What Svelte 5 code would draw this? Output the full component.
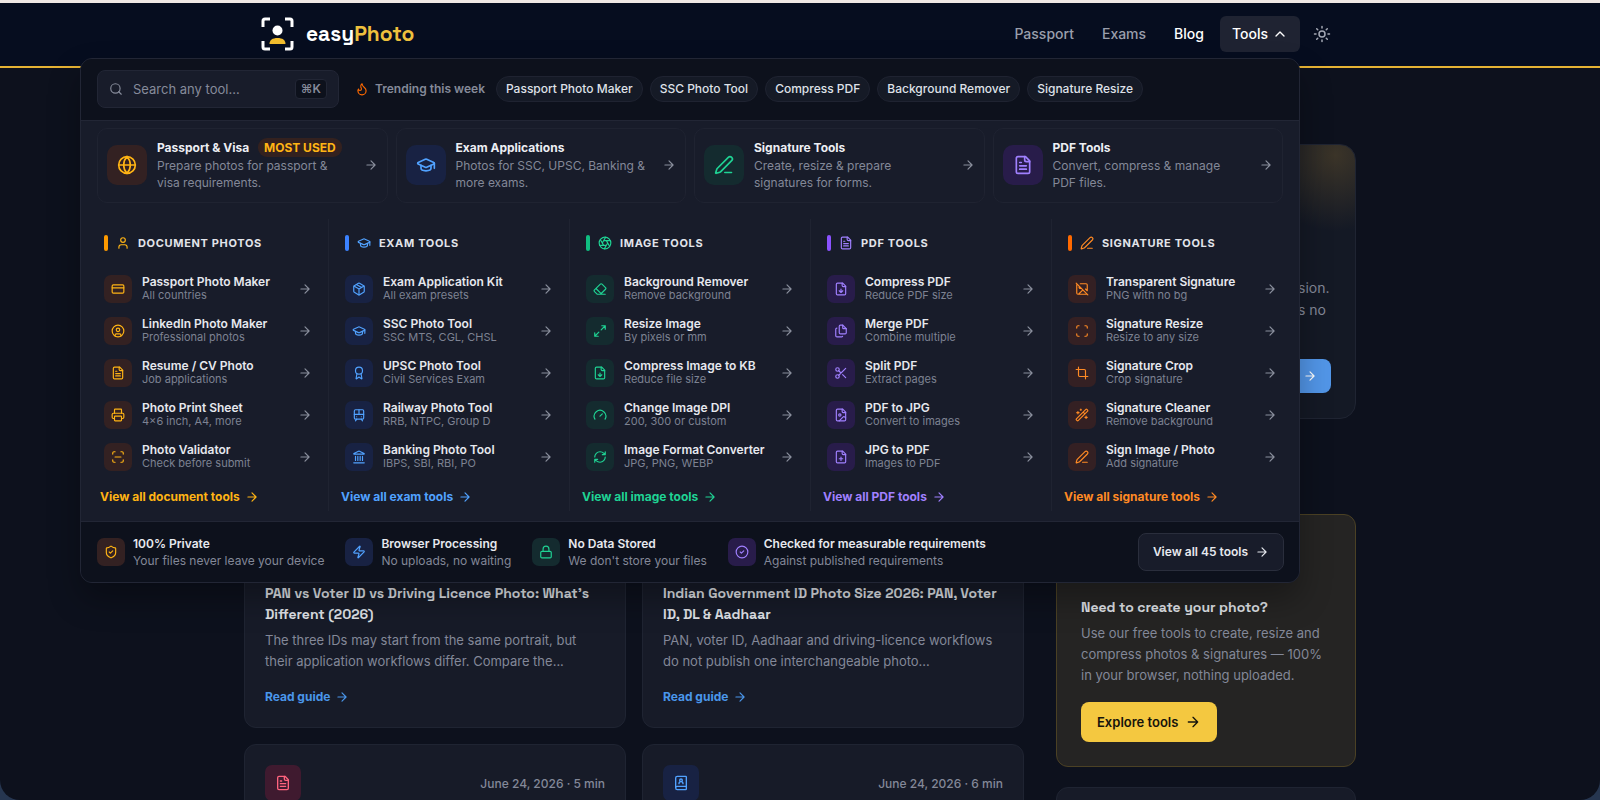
<script lang="ts">
	const file =
		'<path d="M15 2H6a2 2 0 0 0-2 2v16a2 2 0 0 0 2 2h12a2 2 0 0 0 2-2V7Z"/><path d="M14 2v4a2 2 0 0 0 2 2h4"/>';
	const corners =
		'<path d="M3 7V5a2 2 0 0 1 2-2h2M17 3h2a2 2 0 0 1 2 2v2M21 17v2a2 2 0 0 1-2 2h-2M7 21H5a2 2 0 0 1-2-2v-2"/>';

	// 24px stroke icons
	const icons: Record<string, string> = {
		arrow: '<path d="M5 12h14M12 5l7 7-7 7"/>',
		chevron: '<path d="m18 15-6-6-6 6"/>',
		sun: '<circle cx="12" cy="12" r="4"/><path d="M12 2v2M12 20v2M4.93 4.93l1.41 1.41M17.66 17.66l1.41 1.41M2 12h2M20 12h2M6.34 17.66l-1.41 1.41M19.07 4.93l-1.41 1.41"/>',
		search: '<circle cx="11" cy="11" r="8"/><path d="m21 21-4.34-4.34"/>',
		flame:
			'<path d="M8.5 14.5A2.5 2.5 0 0 0 11 12c0-1.38-.5-2-1-3-1.072-2.143-.224-4.054 2-6 .5 2.5 2 4.9 4 6.5 2 1.6 3 3.5 3 5.5a7 7 0 1 1-14 0c0-1.153.433-2.294 1-3a2.5 2.5 0 0 0 2.5 2.5z"/>',
		globe:
			'<circle cx="12" cy="12" r="10"/><path d="M12 2a14.5 14.5 0 0 0 0 20 14.5 14.5 0 0 0 0-20M2 12h20"/>',
		cap: '<path d="M21.42 10.922a1 1 0 0 0-.019-1.838L12.83 5.18a2 2 0 0 0-1.66 0L2.6 9.08a1 1 0 0 0 0 1.832l8.57 3.908a2 2 0 0 0 1.66 0z"/><path d="M22 10v6M6 12.5V16a6 3 0 0 0 12 0v-3.5"/>',
		pen: '<path d="M13 21h8"/><path d="M21.174 6.812a1 1 0 0 0-3.986-3.987L3.842 16.174a2 2 0 0 0-.5.83l-1.321 4.352a.5.5 0 0 0 .623.622l4.353-1.32a2 2 0 0 0 .83-.497z"/>',
		text: file + '<path d="M10 9H8M16 13H8M16 17H8"/>',
		down: file + '<path d="M12 18v-6M9 15l3 3 3-3"/>',
		plus: file + '<path d="M9 15h6M12 18v-6"/>',
		picture:
			file +
			'<circle cx="10" cy="12" r="2"/><path d="m20 17-1.296-1.296a2.41 2.41 0 0 0-3.408 0L9 22"/>',
		files:
			'<path d="M15 2h-4a2 2 0 0 0-2 2v11a2 2 0 0 0 2 2h8a2 2 0 0 0 2-2V8Z"/><path d="M15 2v5a1 1 0 0 0 1 1h5M5 7a2 2 0 0 0-2 2v11a2 2 0 0 0 2 2h8a2 2 0 0 0 1.732-1"/>',
		user: '<path d="M19 21v-2a4 4 0 0 0-4-4H9a4 4 0 0 0-4 4v2"/><circle cx="12" cy="7" r="4"/>',
		card: '<rect width="20" height="14" x="2" y="5" rx="2"/><path d="M2 10h20"/>',
		profile:
			'<circle cx="12" cy="12" r="10"/><circle cx="12" cy="10" r="3"/><path d="M7 20.662V19a2 2 0 0 1 2-2h6a2 2 0 0 1 2 2v1.662"/>',
		printer:
			'<path d="M6 18H4a2 2 0 0 1-2-2v-5a2 2 0 0 1 2-2h16a2 2 0 0 1 2 2v5a2 2 0 0 1-2 2h-2"/><path d="M6 9V3a1 1 0 0 1 1-1h10a1 1 0 0 1 1 1v6"/><rect x="6" y="14" width="12" height="8" rx="1"/>',
		scanline: corners + '<path d="M7 12h10"/>',
		scan: corners,
		box: '<path d="M11 21.73a2 2 0 0 0 2 0l7-4A2 2 0 0 0 21 16V8a2 2 0 0 0-1-1.73l-7-4a2 2 0 0 0-2 0l-7 4A2 2 0 0 0 3 8v8a2 2 0 0 0 1 1.73z"/><path d="M12 22V12M3.29 7 12 12l8.71-5M7.5 4.27l9 5.15"/>',
		award:
			'<path d="m15.477 12.89 1.515 8.526a.5.5 0 0 1-.81.47l-3.58-2.687a1 1 0 0 0-1.197 0l-3.586 2.686a.5.5 0 0 1-.81-.469l1.514-8.526"/><circle cx="12" cy="8" r="6"/>',
		train:
			'<rect width="16" height="16" x="4" y="3" rx="2"/><path d="M4 11h16M12 3v8M8 19l-2 3M18 22l-2-3M8 15h.01M16 15h.01"/>',
		bank: '<path d="M11.12 2.198a2 2 0 0 1 1.76.006l7.866 3.847c.476.233.31.949-.22.949H3.474c-.53 0-.695-.716-.22-.949z"/><path d="M10 18v-7M14 18v-7M18 18v-7M6 18v-7M3 22h18"/>',
		aperture:
			'<circle cx="12" cy="12" r="10"/><path d="m14.31 8 5.74 9.94M9.69 8h11.48M7.38 12l5.74-9.94M9.69 16 3.95 6.06M14.31 16H2.83M16.62 12l-5.74 9.94"/>',
		eraser:
			'<path d="M21 21H8a2 2 0 0 1-1.42-.587l-3.994-3.999a2 2 0 0 1 0-2.828l10-10a2 2 0 0 1 2.829 0l5.999 6a2 2 0 0 1 0 2.828L12.834 21M5.082 11.09l8.828 8.828"/>',
		expand: '<path d="M15 3h6v6M21 3l-7 7M3 21l7-7M9 21H3v-6"/>',
		gauge: '<path d="m12 14 4-4M3.34 19a10 10 0 1 1 17.32 0"/>',
		refresh:
			'<path d="M3 12a9 9 0 0 1 9-9 9.75 9.75 0 0 1 6.74 2.74L21 8M21 3v5h-5M21 12a9 9 0 0 1-9 9 9.75 9.75 0 0 1-6.74-2.74L3 16M8 16H3v5"/>',
		scissors:
			'<circle cx="6" cy="6" r="3"/><circle cx="6" cy="18" r="3"/><path d="M8.12 8.12 12 12M20 4 8.12 15.88M14.8 14.8 20 20"/>',
		noimage:
			'<path d="m2 2 20 20M10.41 10.41a2 2 0 1 1-2.83-2.83M13.5 13.5 6 21M18 12l3 3M3.59 3.59A1.99 1.99 0 0 0 3 5v14a2 2 0 0 0 2 2h14c.55 0 1.052-.22 1.41-.59M21 15V5a2 2 0 0 0-2-2H9"/>',
		crop: '<path d="M6 2v14a2 2 0 0 0 2 2h14M18 22V8a2 2 0 0 0-2-2H2"/>',
		wand: '<path d="m21.64 3.64-1.28-1.28a1.21 1.21 0 0 0-1.72 0L2.36 18.64a1.21 1.21 0 0 0 0 1.72l1.28 1.28a1.2 1.2 0 0 0 1.72 0L21.64 5.36a1.2 1.2 0 0 0 0-1.72M14 7l3 3M5 6v4M19 14v4M10 2v2M7 8H3M21 16h-4M11 3H9"/>',
		shield:
			'<path d="M20 13c0 5-3.5 7.5-7.66 8.95a1 1 0 0 1-.67-.01C7.5 20.5 4 18 4 13V6a1 1 0 0 1 1-1c2 0 4.5-1.2 6.24-2.72a1.17 1.17 0 0 1 1.52 0C14.51 3.81 17 5 19 5a1 1 0 0 1 1 1z"/><path d="m9 12 2 2 4-4"/>',
		zap: '<path d="M4 14a1 1 0 0 1-.78-1.63l9.9-10.2a.5.5 0 0 1 .86.46l-1.92 6.02A1 1 0 0 0 13 10h7a1 1 0 0 1 .78 1.63l-9.9 10.2a.5.5 0 0 1-.86-.46l1.92-6.02A1 1 0 0 0 11 14z"/>',
		lock: '<rect width="18" height="11" x="3" y="11" rx="2"/><path d="M7 11V7a5 5 0 0 1 10 0v4"/>',
		check: '<circle cx="12" cy="12" r="10"/><path d="m9 12 2 2 4-4"/>',
		book: '<path d="M4 19.5v-15A2.5 2.5 0 0 1 6.5 2H19a1 1 0 0 1 1 1v18a1 1 0 0 1-1 1H6.5a1 1 0 0 1 0-5H20M15 13a3 3 0 1 0-6 0"/><circle cx="12" cy="8" r="2"/>'
	};

	const trending = [
		'Passport Photo Maker',
		'SSC Photo Tool',
		'Compress PDF',
		'Background Remover',
		'Signature Resize'
	];

	const features = [
		{ title: 'Passport & Visa', badge: 'MOST USED', text: 'Prepare photos for passport & visa requirements.', icon: 'globe', tone: 'amber' },
		{ title: 'Exam Applications', text: 'Photos for SSC, UPSC, Banking & more exams.', icon: 'cap', tone: 'blue' },
		{ title: 'Signature Tools', text: 'Create, resize & prepare signatures for forms.', icon: 'pen', tone: 'green' },
		{ title: 'PDF Tools', text: 'Convert, compress & manage PDF files.', icon: 'text', tone: 'violet' }
	];

	const groups = [
		{
			title: 'Document Photos',
			icon: 'user',
			tone: 'amber',
			all: 'View all document tools',
			tools: [
				['Passport Photo Maker', 'All countries', 'card'],
				['LinkedIn Photo Maker', 'Professional photos', 'profile'],
				['Resume / CV Photo', 'Job applications', 'text'],
				['Photo Print Sheet', '4×6 inch, A4, more', 'printer'],
				['Photo Validator', 'Check before submit', 'scanline']
			]
		},
		{
			title: 'Exam Tools',
			icon: 'cap',
			tone: 'blue',
			all: 'View all exam tools',
			tools: [
				['Exam Application Kit', 'All exam presets', 'box'],
				['SSC Photo Tool', 'SSC MTS, CGL, CHSL', 'cap'],
				['UPSC Photo Tool', 'Civil Services Exam', 'award'],
				['Railway Photo Tool', 'RRB, NTPC, Group D', 'train'],
				['Banking Photo Tool', 'IBPS, SBI, RBI, PO', 'bank']
			]
		},
		{
			title: 'Image Tools',
			icon: 'aperture',
			tone: 'green',
			all: 'View all image tools',
			tools: [
				['Background Remover', 'Remove background', 'eraser'],
				['Resize Image', 'By pixels or mm', 'expand'],
				['Compress Image to KB', 'Reduce file size', 'down'],
				['Change Image DPI', '200, 300 or custom', 'gauge'],
				['Image Format Converter', 'JPG, PNG, WEBP', 'refresh']
			]
		},
		{
			title: 'PDF Tools',
			icon: 'text',
			tone: 'violet',
			all: 'View all PDF tools',
			tools: [
				['Compress PDF', 'Reduce PDF size', 'down'],
				['Merge PDF', 'Combine multiple', 'files'],
				['Split PDF', 'Extract pages', 'scissors'],
				['PDF to JPG', 'Convert to images', 'picture'],
				['JPG to PDF', 'Images to PDF', 'plus']
			]
		},
		{
			title: 'Signature Tools',
			icon: 'pen',
			tone: 'orange',
			all: 'View all signature tools',
			tools: [
				['Transparent Signature', 'PNG with no bg', 'noimage'],
				['Signature Resize', 'Resize to any size', 'scan'],
				['Signature Crop', 'Crop signature', 'crop'],
				['Signature Cleaner', 'Remove background', 'wand'],
				['Sign Image / Photo', 'Add signature', 'pen']
			]
		}
	];

	const promises = [
		{ title: '100% Private', text: 'Your files never leave your device', icon: 'shield', tone: 'amber' },
		{ title: 'Browser Processing', text: 'No uploads, no waiting', icon: 'zap', tone: 'blue' },
		{ title: 'No Data Stored', text: "We don't store your files", icon: 'lock', tone: 'green' },
		{ title: 'Checked for measurable requirements', text: 'Against published requirements', icon: 'check', tone: 'violet' }
	];

	const guides = [
		{
			title: 'PAN vs Voter ID vs Driving Licence Photo: What’s Different (2026)',
			text: 'The three IDs may start from the same portrait, but their application workflows differ. Compare the...'
		},
		{
			title: 'Indian Government ID Photo Size 2026: PAN, Voter ID, DL & Aadhaar',
			text: 'PAN, voter ID, Aadhaar and driving-licence workflows do not publish one interchangeable photo...'
		}
	];

	const upcoming = [
		{ icon: 'text', tone: 'rose', meta: 'June 24, 2026 · 5 min' },
		{ icon: 'book', tone: 'blue', meta: 'June 24, 2026 · 6 min' }
	];

	let open = $state(true);
</script>

{#snippet icon(name: string, size: number)}
	<svg class="icon" width={size} height={size} viewBox="0 0 24 24" aria-hidden="true">
		{@html icons[name]}
	</svg>
{/snippet}

<div class="app">
	<header class="topbar">
		<div class="topbar-inner">
			<a class="brand" href="#home">
				<svg width="34" height="34" viewBox="-1 0 34 34" aria-hidden="true">
					<path
						d="M2 10V4q0-2 2-2h5M24 2h5q2 0 2 2v6M31 24v6q0 2-2 2h-5M9 32H4q-2 0-2-2v-6"
						fill="none"
						stroke="#fff"
						stroke-width="3"
					/>
					<circle cx="16.5" cy="13.5" r="5" fill="#fff" />
					<path d="M8.5 27c0-4 3-6 8-6s8 2 8 6z" fill="#f2bd2e" />
				</svg>
				<span class="brand-name">easy<span class="gold">Photo</span></span>
			</a>
			<nav>
				<a class="nav-link" href="#passport">Passport</a>
				<a class="nav-link" href="#exams">Exams</a>
				<a class="nav-link current" href="#blog">Blog</a>
				<div class="dropdown">
					<button class="nav-link tools-button" aria-expanded={open} onclick={() => (open = !open)}>
						Tools {@render icon('chevron', 16)}
					</button>
					{#if open}
						<div class="mega">
							<div class="mega-top">
								<label class="search">
									{@render icon('search', 14)}
									<input type="search" placeholder="Search any tool..." aria-label="Search any tool" />
									<kbd>⌘K</kbd>
								</label>
								<p class="trending">{@render icon('flame', 14)} Trending this week</p>
								<div class="pills">
									{#each trending as name (name)}
										<a class="pill" href="#tools">{name}</a>
									{/each}
								</div>
							</div>

							<div class="features">
								{#each features as item (item.title)}
									<a class="feature" href="#tools">
										<span class="tile large {item.tone}">{@render icon(item.icon, 20)}</span>
										<span class="feature-body">
											<span class="feature-title">
												{item.title}
												{#if item.badge}<span class="badge">{item.badge}</span>{/if}
											</span>
											<span class="feature-text">{item.text}</span>
										</span>
										{@render icon('arrow', 14)}
									</a>
								{/each}
							</div>

							<div class="groups">
								{#each groups as group (group.title)}
									<section class="group {group.tone}">
										<h3>
											<span class="bar"></span>
											{@render icon(group.icon, 14)}
											<span class="group-title">{group.title}</span>
										</h3>
										<ul>
											{#each group.tools as [name, note, glyph] (name)}
												<li>
													<a class="tool" href="#tools">
														<span class="tile {group.tone}">{@render icon(glyph, 14)}</span>
														<span class="tool-body">
															<span class="tool-name">{name}</span>
															<span class="tool-note">{note}</span>
														</span>
														{@render icon('arrow', 14)}
													</a>
												</li>
											{/each}
										</ul>
										<a class="view-all" href="#tools">{group.all} {@render icon('arrow', 14)}</a>
									</section>
								{/each}
							</div>

							<div class="mega-bottom">
								{#each promises as item (item.title)}
									<div class="promise">
										<span class="tile {item.tone}">{@render icon(item.icon, 14)}</span>
										<span class="promise-body">
											<strong>{item.title}</strong>
											<span>{item.text}</span>
										</span>
									</div>
								{/each}
								<a class="all-tools" href="#tools">View all 45 tools {@render icon('arrow', 14)}</a>
							</div>
						</div>
					{/if}
				</div>
				<button class="theme" aria-label="Toggle theme">{@render icon('sun', 18)}</button>
			</nav>
		</div>
	</header>

	<main>
		<section class="hero">
			<p>sion.<br />s no</p>
			<a class="hero-button" href="#guide" aria-label="Read guide">{@render icon('arrow', 14)}</a>
		</section>

		<div class="content">
			<div class="guides">
				{#each guides as guide (guide.title)}
					<article class="guide">
						<div class="guide-head"></div>
						<h2>{guide.title}</h2>
						<p>{guide.text}</p>
						<a class="read" href="#guide">Read guide {@render icon('arrow', 14)}</a>
					</article>
				{/each}
				{#each upcoming as item (item.meta)}
					<article class="guide">
						<div class="guide-head">
							<span class="tile medium {item.tone}">{@render icon(item.icon, 16)}</span>
							<span>{item.meta}</span>
						</div>
					</article>
				{/each}
			</div>
			<aside>
				<section class="promo">
					<h2>Need to create your photo?</h2>
					<p>
						Use our free tools to create, resize and compress photos &amp; signatures — 100% in your
						browser, nothing uploaded.
					</p>
					<a class="explore" href="#tools">Explore tools {@render icon('arrow', 16)}</a>
				</section>
				<section class="guide"></section>
			</aside>
		</div>
	</main>
</div>

<style>
	:global(body) {
		margin: 0;
		background: linear-gradient(#efe8e5 50%, #263650 50%);
	}

	.app {
		--line: #222635;
		--muted: #838898;
		--panel: #181c2a;
		--deep: #0d111c;
		box-sizing: border-box;
		height: 100vh;
		border-top: 3px solid #efe8e5;
		border-radius: 0 0 20px 20px;
		background: #0d111d;
		color: #e6e8ee;
		font-family: Inter, 'Liberation Sans', sans-serif;
		font-size: 13px;
		overflow: hidden;
	}

	.app :global(*) {
		box-sizing: border-box;
	}

	a {
		color: inherit;
		text-decoration: none;
	}

	button {
		font: inherit;
		border: 0;
		cursor: pointer;
	}

	p,
	h2,
	h3,
	ul {
		margin: 0;
		padding: 0;
		list-style: none;
	}

	.icon {
		flex: none;
		fill: none;
		stroke: currentColor;
		stroke-width: 2;
		stroke-linecap: round;
		stroke-linejoin: round;
	}

	.topbar {
		position: relative;
		z-index: 2;
		height: 65px;
		border-bottom: 2px solid #e5b234;
		background: #060d1f;
	}

	.topbar-inner {
		display: flex;
		align-items: center;
		justify-content: space-between;
		max-width: 1080px;
		height: 61px;
		margin: 0 auto;
	}

	.brand {
		display: flex;
		align-items: center;
		gap: 12px;
	}

	.brand-name {
		font-family: 'Space Grotesk', Inter, sans-serif;
		font-size: 21px;
		font-weight: 700;
		color: #fff;
	}

	.gold {
		color: #eec03d;
	}

	nav {
		display: flex;
		align-items: center;
		gap: 4px;
	}

	.nav-link {
		padding: 0 12px;
		font-size: 14px;
		font-weight: 500;
		line-height: 36px;
		color: #9a9fac;
	}

	.nav-link.current {
		color: #fff;
	}

	.dropdown {
		position: relative;
	}

	.tools-button {
		display: flex;
		align-items: center;
		gap: 4px;
		border-radius: 6px;
		background: #1f2332;
		color: #fff;
	}

	.theme {
		display: grid;
		place-items: center;
		width: 36px;
		height: 36px;
		padding: 0;
		background: none;
		color: #a5a9b5;
	}

	.mega {
		position: absolute;
		top: calc(100% + 6px);
		right: 0;
		width: min(1220px, 90vw);
		border: 1px solid var(--line);
		border-radius: 12px;
		background: var(--panel);
		box-shadow: 0 16px 32px rgb(0 0 0 / 0.3);
		overflow: hidden;
	}

	.mega-top {
		display: flex;
		align-items: center;
		padding: 11px 16px 12px;
		border-bottom: 1px solid var(--line);
		background: var(--deep);
	}

	.search {
		display: flex;
		align-items: center;
		gap: 10px;
		width: 242px;
		height: 38px;
		padding: 0 11px;
		border: 1px solid var(--line);
		border-radius: 8px;
		background: var(--panel);
		color: #868b9a;
	}

	.search input {
		flex: 1;
		min-width: 0;
		padding: 0;
		border: 0;
		outline: 0;
		background: none;
		color: inherit;
		font: inherit;
	}

	.search input::placeholder {
		color: #868b9a;
	}

	kbd {
		padding: 0 5px;
		border: 1px solid var(--line);
		border-radius: 4px;
		background: var(--deep);
		font: 600 12px/18px Inter, 'DejaVu Sans', sans-serif;
	}

	.trending {
		display: flex;
		align-items: center;
		gap: 6px;
		margin: 0 11px 0 16px;
		font-size: 12px;
		font-weight: 600;
		color: #858a99;
	}

	.trending .icon {
		color: #ff6900;
	}

	.pills {
		display: flex;
		gap: 7px;
	}

	.pill {
		padding: 0 9px;
		border: 1px solid #1f2331;
		border-radius: 13px;
		background: #151a26;
		font-size: 12px;
		font-weight: 500;
		line-height: 24px;
		color: #dfe1e8;
	}

	.features {
		display: grid;
		grid-template-columns: repeat(4, 1fr);
		gap: 8px;
		padding: 7px 16px 16px;
	}

	.feature {
		display: flex;
		align-items: center;
		gap: 10px;
		height: 75px;
		padding: 0 9px;
		border: 1px solid #1f2331;
		border-radius: 10px;
		color: #8a8f9d;
	}

	.feature-body {
		display: grid;
		flex: 1;
		gap: 1px;
		padding-right: 3px;
	}

	.feature-title {
		font-size: 12px;
		font-weight: 700;
		line-height: 17px;
		color: #eceef3;
		white-space: nowrap;
	}

	.badge {
		margin-left: 6px;
		padding: 2px 6px;
		border-radius: 9px;
		background: #33211f;
		color: #ffb414;
	}

	.feature-text {
		font-size: 12px;
		line-height: 17px;
		color: var(--muted);
	}

	.tile {
		display: grid;
		flex: none;
		place-items: center;
		width: 28px;
		height: 28px;
		border-radius: 7px;
		background: var(--tint);
		color: var(--tone);
	}

	.tile.medium {
		width: 36px;
		height: 36px;
	}

	.tile.large {
		width: 40px;
		height: 40px;
		border-radius: 10px;
	}

	.amber {
		--tone: #ffb414;
		--bar: #fe9a00;
		--tint: #332122;
	}

	.blue {
		--tone: #51a2ff;
		--bar: #3b82ff;
		--tint: #182243;
	}

	.green {
		--tone: #1fd394;
		--bar: #10bd80;
		--tint: #142b2f;
	}

	.violet {
		--tone: #a080ff;
		--bar: #8b52ff;
		--tint: #281c4a;
	}

	.orange {
		--tone: #ff8a24;
		--bar: #ff6900;
		--tint: #342023;
	}

	.rose {
		--tone: #ff637e;
		--tint: #3f1a2f;
	}

	.groups {
		display: grid;
		grid-template-columns: repeat(5, 1fr);
		padding: 0 6px 10px 7px;
	}

	.group {
		padding: 15px 12px 5px;
		border-right: 1px solid #1f2331;
	}

	.group:last-child {
		border-right: 0;
	}

	h3 {
		display: flex;
		align-items: center;
		padding: 0 4px;
		margin-bottom: 16px;
		line-height: 18px;
		color: var(--tone);
	}

	.bar {
		width: 4px;
		height: 16px;
		margin-right: 8px;
		border-radius: 2px;
		background: var(--bar);
	}

	.group-title {
		margin-left: 8px;
		font-size: 11px;
		font-weight: 700;
		letter-spacing: 0.06em;
		text-transform: uppercase;
		color: #e2e4ea;
	}

	.tool {
		display: flex;
		align-items: center;
		gap: 10px;
		height: 42px;
		padding: 0 4px;
		color: #8a8f9d;
	}

	.tool-body {
		display: grid;
		flex: 1;
	}

	.tool-name {
		font-size: 12px;
		font-weight: 600;
		line-height: 14px;
		color: #e6e8ee;
		white-space: nowrap;
	}

	.tool-note {
		font-size: 11px;
		line-height: 13px;
		color: #7d8292;
	}

	.view-all {
		display: flex;
		align-items: center;
		gap: 5px;
		margin-top: 10px;
		font-size: 12px;
		font-weight: 700;
		line-height: 18px;
		color: var(--tone);
	}

	.mega-bottom {
		display: flex;
		align-items: center;
		gap: 21px;
		padding: 11px 15px 11px 16px;
		border-top: 1px solid var(--line);
		background: var(--deep);
	}

	.promise {
		display: flex;
		align-items: center;
		gap: 8px;
	}

	.promise-body {
		display: grid;
		font-size: 12px;
		line-height: 17px;
		color: var(--muted);
	}

	.promise-body strong {
		font-weight: 600;
		color: #e6e8ee;
	}

	.all-tools {
		display: flex;
		align-items: center;
		gap: 7px;
		height: 38px;
		margin-left: auto;
		padding: 0 14px;
		border: 1px solid #2a2e3c;
		border-radius: 8px;
		background: var(--panel);
		font-size: 12px;
		font-weight: 600;
	}

	main {
		max-width: 1112px;
		margin: 0 auto;
		padding-top: 76px;
	}

	.hero {
		display: flex;
		flex-direction: column;
		align-items: flex-end;
		height: 275px;
		padding: 132px 24px 25px;
		border: 1px solid #1f2432;
		border-radius: 16px;
		background:
			radial-gradient(circle at calc(100% - 20px) 10px, #3b3428 0, rgb(59 52 40 / 0) 76px),
			#141925;
	}

	.hero p {
		width: 33px;
		font-size: 14px;
		line-height: 22px;
		color: var(--muted);
		white-space: nowrap;
	}

	.hero-button {
		display: flex;
		align-items: center;
		justify-content: flex-end;
		width: 160px;
		height: 34px;
		margin-top: auto;
		padding-right: 14px;
		border-radius: 8px;
		background: #5296e8;
		color: #fff;
	}

	.content {
		display: grid;
		grid-template-columns: 1fr 300px;
		gap: 32px;
		margin-top: 95px;
	}

	.guides {
		display: grid;
		grid-template-columns: 1fr 1fr;
		gap: 16px;
		align-content: start;
	}

	.guide {
		min-height: 214px;
		padding: 20px;
		border: 1px solid #1f2432;
		border-radius: 12px;
		background: #171b28;
	}

	.guide-head {
		display: flex;
		align-items: center;
		justify-content: space-between;
		min-height: 36px;
		margin-bottom: 12px;
		font-size: 12px;
		font-weight: 500;
		color: var(--muted);
	}

	h2 {
		font-family: 'Space Grotesk', Inter, sans-serif;
		font-size: 14px;
		font-weight: 700;
		line-height: 21px;
		color: #dfe1e6;
	}

	.guide p,
	.promo p {
		margin-top: 5px;
		font-size: 13px;
		line-height: 21px;
		color: var(--muted);
	}

	.read {
		display: flex;
		align-items: center;
		gap: 5px;
		margin-top: 15px;
		font-size: 12px;
		font-weight: 700;
		line-height: 20px;
		color: #4a96ea;
	}

	aside {
		display: grid;
		gap: 20px;
		align-content: start;
	}

	.promo {
		padding: 82px 24px 24px;
		border: 1px solid #4b4124;
		border-radius: 12px;
		background: #252423;
	}

	.explore {
		display: inline-flex;
		align-items: center;
		gap: 7px;
		height: 40px;
		margin-top: 16px;
		padding: 0 16px;
		border-radius: 8px;
		background: #f4c840;
		color: #16140c;
		font-weight: 600;
	}
</style>
